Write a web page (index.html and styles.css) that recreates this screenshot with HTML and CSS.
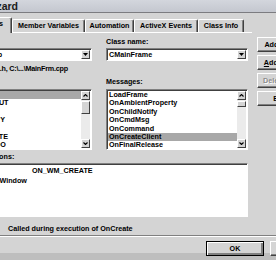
FILE: index.html
```html
<!DOCTYPE html>
<html lang="en">
<head>
<meta charset="UTF-8"/>
<title>MFC ClassWizard</title>
<link rel="stylesheet" href="styles.css">
</head>
<body>
<div class="titlebar"><span class="title">MFC ClassWizard</span></div>
<div class="dialog">
  <div class="top">
    <div class="tabctl">
      <div class="tabs">
        <div class="tab active">Message Maps</div>
        <div class="tab w-member">Member Variables</div>
        <div class="tab w-auto">Automation</div>
        <div class="tab w-activex">ActiveX Events</div>
        <div class="tab w-info">Class Info</div>
      </div>
      <div class="page">
        <div class="cols">
          <div class="col">
            <div class="lbl">Project:</div>
            <div class="combo">
              <span class="combo-text">MyProject.dsp</span>
              <span class="drop"><svg width="5" height="3" viewBox="0 0 5 3"><polygon points="0,0 5,0 2.5,3" fill="#000"/></svg></span>
            </div>
            <div class="file">C:\...\MainFrm.h, C:\...\MainFrm.cpp</div>
            <div class="lbl lbl-list">Object IDs:</div>
            <div class="list">
              <div class="items">
                <div class="row sel">CMainFrame</div>
                <div class="row">ID_APP_ABOUT</div>
                <div class="row">ID_APP_EXIT</div>
                <div class="row">ID_EDIT_COPY</div>
                <div class="row">ID_EDIT_CUT</div>
                <div class="row">ID_EDIT_PASTE</div>
                <div class="row">ID_EDIT_UNDO</div>
              </div>
              <div class="vscroll">
                <span class="sbtn"><svg width="5" height="3" viewBox="0 0 5 3"><polyline points="0.5,2.5 2.5,0.5 4.5,2.5" fill="none" stroke="#000" stroke-width="1.1"/></svg></span>
                <span class="thumb thumb-ids"></span>
                <span class="track"></span>
                <span class="sbtn"><svg width="5" height="3" viewBox="0 0 5 3"><polyline points="0.5,0.5 2.5,2.5 4.5,0.5" fill="none" stroke="#000" stroke-width="1.1"/></svg></span>
              </div>
            </div>
          </div>
          <div class="col">
            <div class="lbl">Class name:</div>
            <div class="combo">
              <span class="combo-text">CMainFrame</span>
              <span class="drop"><svg width="5" height="3" viewBox="0 0 5 3"><polygon points="0,0 5,0 2.5,3" fill="#000"/></svg></span>
            </div>
            <div class="lbl lbl-msg">Messages:</div>
            <div class="list">
              <div class="items">
                <div class="row">LoadFrame</div>
                <div class="row">OnAmbientProperty</div>
                <div class="row">OnChildNotify</div>
                <div class="row">OnCmdMsg</div>
                <div class="row">OnCommand</div>
                <div class="row sel">OnCreateClient</div>
                <div class="row">OnFinalRelease</div>
              </div>
              <div class="vscroll">
                <span class="sbtn"><svg width="5" height="3" viewBox="0 0 5 3"><polyline points="0.5,2.5 2.5,0.5 4.5,2.5" fill="none" stroke="#000" stroke-width="1.1"/></svg></span>
                <span class="thumb thumb-msg"></span>
                <span class="track"></span>
                <span class="sbtn"><svg width="5" height="3" viewBox="0 0 5 3"><polyline points="0.5,0.5 2.5,2.5 4.5,0.5" fill="none" stroke="#000" stroke-width="1.1"/></svg></span>
              </div>
            </div>
          </div>
        </div>
        <div class="lbl lbl-funcs">Member functions:</div>
        <div class="funcs">
          <div class="frow">
            <span class="glyph">W</span>
            <span class="fname">OnCreate</span>
            <span class="fmap">ON_WM_CREATE</span>
          </div>
          <div class="frow">
            <span class="glyph">V</span>
            <span class="fname">PreCreateWindow</span>
            <span class="fmap"></span>
          </div>
        </div>
      </div>
    </div>
    <div class="side">
      <button class="btn">Add Class... <span class="arrow">&#9662;</span></button>
      <button class="btn"><u>A</u>dd Function...</button>
      <button class="btn" disabled>Delete Function</button>
      <button class="btn">Edit Code</button>
    </div>
  </div>
  <div class="desc">Called during execution of OnCreate</div>
  <div class="sep"></div>
  <div class="footer">
    <button class="btn default">OK</button>
    <button class="btn">Cancel</button>
  </div>
</div>
</body>
</html>
```

FILE: styles.css
```css
* {
  box-sizing: border-box;
}
html, body {
  margin: 0;
  padding: 0;
}
body {
  width: 276px;
  height: 260px;
  overflow: hidden;
  background: linear-gradient(to bottom, #d4d4d4 253px, #bebebe 253px);
  font-family: 'Liberation Sans', Arial, sans-serif;
  font-size: 7.2px;
  font-weight: bold;
  color: #000;
}
.titlebar {
  height: 13px;
  background: linear-gradient(to bottom, #d3d6dd, #c4c7cf);
  border-bottom: 1px solid #7c7c80;
  font-size: 10.5px;
  line-height: 12px;
  color: #1c1c1c;
  white-space: nowrap;
  overflow: hidden;
}
.title {
  display: block;
  margin-left: -70px;
}
.dialog {
  margin-left: -56px;
  width: 420px;
}
.top {
  display: flex;
  gap: 5px;
}
/* tab control */
.tabctl {
  width: 308px;
}
.tabs {
  display: flex;
  align-items: flex-end;
  height: 15px;
  margin-top: 4px;
  padding-left: 2px;
}
.tab {
  height: 13px;
  line-height: 12px;
  text-align: center;
  white-space: nowrap;
  border-top: 1px solid #fff;
  border-left: 1px solid #fff;
  border-right: 1px solid #404040;
  box-shadow: inset -1px 0 #808080;
  border-radius: 2px 2px 0 0;
}
.tab.active {
  position: relative;
  z-index: 1;
  width: 66px;
  height: 16px;
  margin-bottom: -1px;
  padding-right: 8px;
  text-align: right;
  background: #d4d4d4;
}
.w-member { width: 73px; }
.w-auto { width: 49px; }
.w-activex { width: 64px; }
.w-info { width: 46px; }
.page {
  border-top: 1px solid #fff;
  padding: 4px 4px 0 6px;
}
.cols {
  display: flex;
  gap: 14px;
}
.col {
  width: 142px;
  display: flex;
  flex-direction: column;
}
.lbl {
  height: 9px;
  line-height: 9px;
  white-space: nowrap;
}
.lbl-list { margin-top: 4px; }
.lbl-msg { margin-top: 16px; }
.lbl-funcs { margin-top: 2px; }
/* sunken controls */
.combo, .list, .funcs {
  background: #fff;
  border: 1px solid;
  border-color: #808080 #fff #fff #808080;
  box-shadow: inset 1px 1px #404040;
}
.combo {
  margin-top: 2px;
  height: 13px;
  display: flex;
  align-items: center;
  padding: 0 1px 0 2px;
}
.combo-text {
  flex: 1;
  white-space: nowrap;
}
.drop, .sbtn {
  width: 9px;
  height: 9px;
  display: flex;
  align-items: center;
  justify-content: center;
  background: #d4d4d4;
  border: 1px solid;
  border-color: #fff #404040 #404040 #fff;
}
.file {
  margin-top: 3px;
  margin-left: 5px;
  height: 9px;
  line-height: 9px;
  letter-spacing: -0.2px;
  white-space: nowrap;
}
.list {
  margin-top: 3px;
  height: 61px;
  display: flex;
  padding: 1px;
}
.items {
  flex: 1;
  overflow: hidden;
}
.row {
  height: 8.4px;
  line-height: 8.4px;
  padding-left: 1px;
  white-space: nowrap;
}
.row.sel {
  background: #a8a8a8;
}
.vscroll {
  width: 9px;
  display: flex;
  flex-direction: column;
  background: #ebebeb;
}
.thumb {
  margin-top: 1px;
  height: 13px;
  background: #d4d4d4;
  border: 1px solid;
  border-color: #fff #404040 #404040 #fff;
}
.thumb-msg { height: 6px; }
.track { flex: 1; }
.funcs {
  margin-top: 2px;
  height: 54px;
  padding-top: 1px;
}
.frow {
  display: flex;
  align-items: center;
  height: 10.5px;
  white-space: nowrap;
}
.glyph {
  width: 10px;
  height: 9px;
  margin-left: 1px;
  margin-right: 3.5px;
  font-size: 6px;
  line-height: 7px;
  text-align: center;
  border: 1px solid #808080;
}
.fname {
  width: 66.5px;
}
/* buttons */
.side {
  display: flex;
  flex-direction: column;
  gap: 3px;
  padding-top: 24px;
}
.btn {
  height: 15px;
  width: 66px;
  padding: 0;
  font: inherit;
  color: #000;
  white-space: nowrap;
  background: #d4d4d4;
  border: 1px solid;
  border-color: #fff #404040 #404040 #fff;
  box-shadow: inset -1px -1px #808080;
}
.btn .arrow {
  margin-left: 5px;
  font-size: 6px;
}
.btn:disabled {
  color: #8c8c8c;
  text-shadow: 1px 1px #fff;
}
.desc {
  margin-top: 7px;
  height: 9px;
  line-height: 9px;
  padding-left: 64px;
  white-space: nowrap;
}
.sep {
  margin-top: 2px;
  border-top: 1px solid #808080;
  border-bottom: 1px solid #fff;
}
.footer {
  display: flex;
  gap: 6px;
  margin-top: 4px;
  padding-left: 262px;
}
.footer .btn {
  width: 58px;
}
.btn.default {
  border: 1px solid #000;
  box-shadow: inset 1px 1px #fff, inset -2px -2px #808080, inset -1px -1px #404040;
}
```
